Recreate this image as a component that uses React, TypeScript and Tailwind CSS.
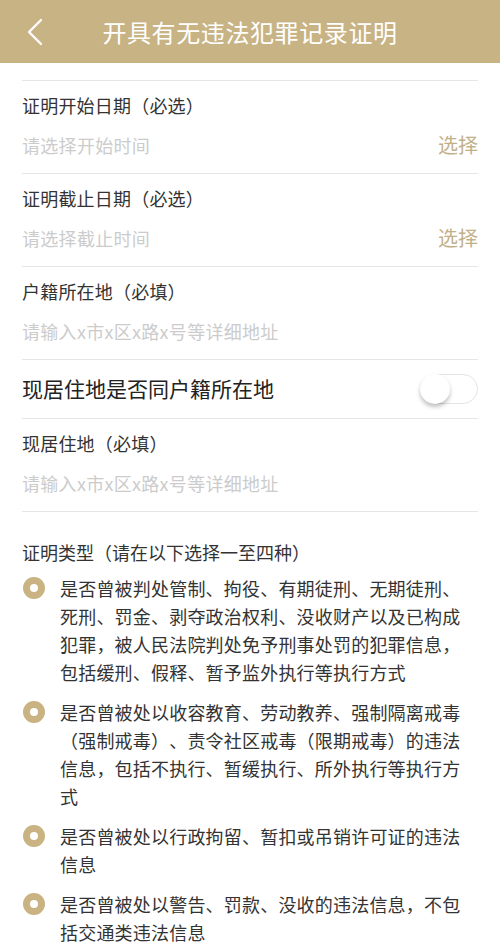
import React from "react";

const FONT = { fontFamily: '"Noto Sans CJK SC", "Noto Sans", sans-serif' };

const fields = [
  { label: "证明开始日期（必选）", placeholder: "请选择开始时间", action: "选择" },
  { label: "证明截止日期（必选）", placeholder: "请选择截止时间", action: "选择" },
  { label: "户籍所在地（必填）", placeholder: "请输入x市x区x路x号等详细地址" },
];

const options = [
  "是否曾被判处管制、拘役、有期徒刑、无期徒刑、死刑、罚金、剥夺政治权利、没收财产以及已构成犯罪，被人民法院判处免予刑事处罚的犯罪信息，包括缓刑、假释、暂予监外执行等执行方式",
  "是否曾被处以收容教育、劳动教养、强制隔离戒毒（强制戒毒）、责令社区戒毒（限期戒毒）的违法信息，包括不执行、暂缓执行、所外执行等执行方式",
  "是否曾被处以行政拘留、暂扣或吊销许可证的违法信息",
  "是否曾被处以警告、罚款、没收的违法信息，不包括交通类违法信息",
];

const Field = ({
  label,
  placeholder,
  action,
}: {
  label: string;
  placeholder: string;
  action?: string;
}) => (
  <div className="mx-[22px] border-b border-[#e6e6e6] pt-[12px] pb-[16px]">
    <div className="text-[18px] leading-[24px] tracking-[0.2px] text-[#333333]">{label}</div>
    <div className="mt-[16px] flex items-center justify-between">
      <span className="text-[18px] leading-[24px] tracking-[0.3px] text-[#cccccc]">{placeholder}</span>
      {action && (
        <span className="text-[20px] leading-[24px] text-[#c2b088]">{action}</span>
      )}
    </div>
  </div>
);

const Radio = () => (
  <div className="mt-[3px] flex h-[22px] w-[22px] shrink-0 items-center justify-center rounded-full bg-[#c9b382]">
    <div className="h-[8px] w-[8px] rounded-full bg-white" />
  </div>
);

export default function App() {
  return (
    <div className="min-h-[950px] w-[500px] bg-white [text-spacing-trim:space-all]" style={FONT}>
      <div className="flex h-[63px] items-center bg-[#c8b384]">
        <div className="flex w-[60px] items-center pl-[26px]">
          <svg width="18" height="28" viewBox="0 0 18 28" fill="none">
            <path d="M15 2 L3 14 L15 26" stroke="white" strokeWidth="2.4" strokeLinecap="round" strokeLinejoin="round" />
          </svg>
        </div>
        <div className="flex-1 text-center text-[24px] tracking-[0.6px] text-white">
          开具有无违法犯罪记录证明
        </div>
        <div className="w-[60px]" />
      </div>

      <div className="h-[17px]" />
      <div className="mx-[22px] border-t border-[#e6e6e6]" />

      {fields.map((f) => (
        <Field key={f.label} {...f} />
      ))}

      <div className="mx-[22px] flex h-[59px] items-center justify-between border-b border-[#e6e6e6]">
        <span className="text-[21px] text-[#222222]">现居住地是否同户籍所在地</span>
        <div className="relative h-[30px] w-[58px] rounded-full border border-[#e4e4e4] bg-white">
          <div className="absolute left-[-1px] top-[-1px] h-[30px] w-[30px] rounded-full bg-white shadow-[0_3px_4px_rgba(0,0,0,0.25)]" />
        </div>
      </div>

      <Field label="现居住地（必填）" placeholder="请输入x市x区x路x号等详细地址" />

      <div className="px-[22px] pt-[28px] text-[18px] leading-[24px] text-[#333333]">
        证明类型（请在以下选择一至四种）
      </div>

      <div className="flex flex-col gap-[12px] pt-[10px] pb-[10px]">
        {options.map((o) => (
          <div key={o} className="flex gap-[15px] pl-[23px] pr-[30px]">
            <Radio />
            <div className="flex-1 text-[18px] leading-[28px] tracking-[0.2px] text-[#333333]">{o}</div>
          </div>
        ))}
      </div>
    </div>
  );
}
